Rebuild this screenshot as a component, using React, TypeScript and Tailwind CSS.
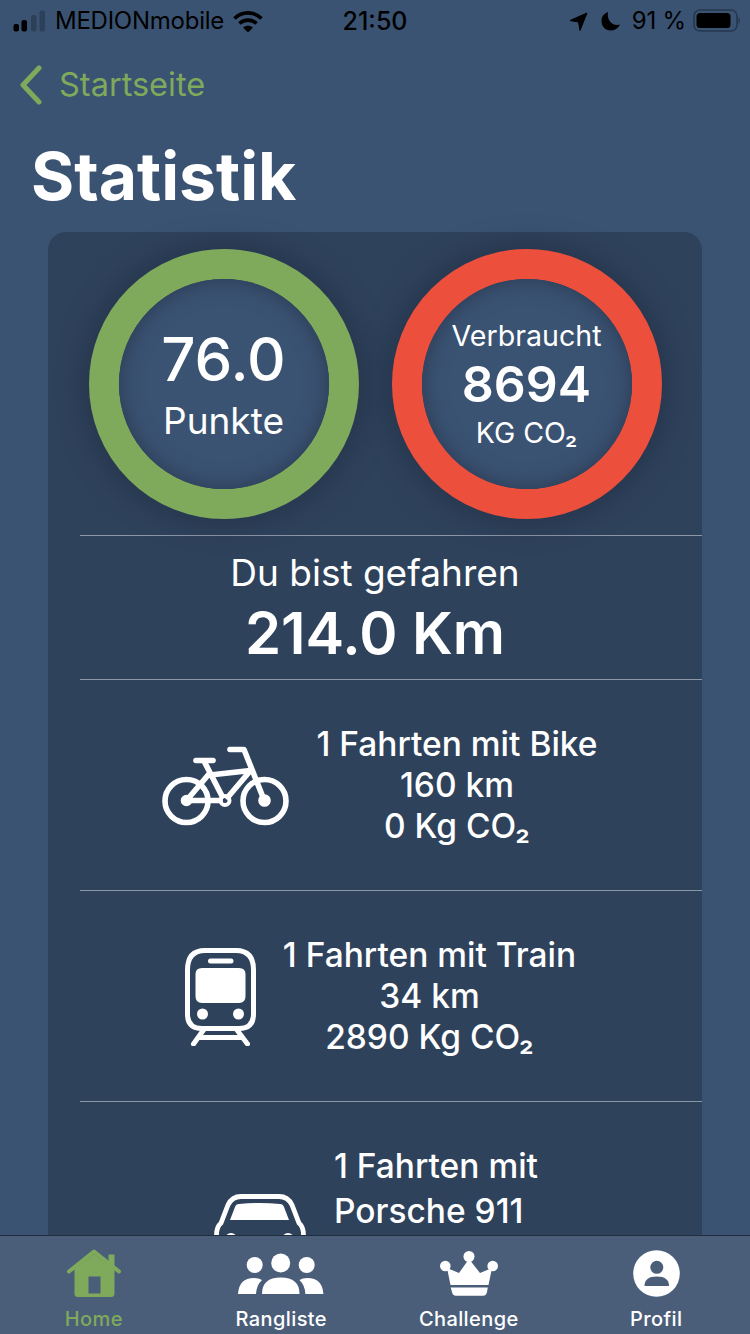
const BikeIcon = () => (
  <svg width="127" height="80" viewBox="0 0 127 80" fill="none" stroke="white" strokeWidth="5.6" strokeLinecap="round" strokeLinejoin="round" className="shrink-0">
    <circle cx="24.5" cy="55" r="21.5" />
    <circle cx="102.5" cy="55" r="21.5" />
    <path d="M68 3.5H82L102.5 55" />
    <path d="M34 14.5H51" />
    <path d="M42 15L60 50" />
    <path d="M48 29L88.5 24.5L66 51" />
    <path d="M47 28L24.5 54.5H58" />
    <circle cx="63" cy="54.5" r="4.5" strokeWidth="4" />
    <circle cx="24.5" cy="54.5" r="3" fill="white" />
    <circle cx="102.5" cy="54.5" r="3.5" fill="white" />
  </svg>
);

const TrainIcon = () => (
  <svg width="71" height="98" viewBox="0 0 71 98" fill="none" className="shrink-0 ml-[1px]">
    <path d="M20 2.5H51Q68.5 2.5 68.5 22V66Q68.5 80.5 54 80.5H17Q2.5 80.5 2.5 66V22Q2.5 2.5 20 2.5Z" stroke="white" strokeWidth="5" />
    <rect x="23" y="10.5" width="25.5" height="5" rx="2.5" fill="white" />
    <path d="M17 20H54Q60.5 20 60.5 26V48Q60.5 55 54 55H17Q10.5 55 10.5 48V26Q10.5 20 17 20Z" fill="white" />
    <circle cx="17.5" cy="66" r="5.5" fill="white" />
    <circle cx="53.5" cy="66" r="5.5" fill="white" />
    <path d="M18.5 82L8.5 96M52 82L62.5 96M14 89.5H57" stroke="white" strokeWidth="5" strokeLinecap="round" />
  </svg>
);

const CarIcon = () => (
  <svg width="92" height="78" viewBox="0 0 92 78" fill="none" className="shrink-0 mt-[50px]">
    <path d="M2.5 60V41Q2.5 33 7 29L14 11Q18 2.5 27 2.5H65Q74 2.5 78 11L85 29Q89.5 33 89.5 41V60Q89.5 66 83 66H9Q2.5 66 2.5 60Z" stroke="white" strokeWidth="4.8" />
    <path d="M25 10Q46 8 66 10Q69 10 70 13L75 26H16L21 13Q22 10 25 10Z" fill="white" />
    <circle cx="17" cy="45" r="6" fill="white" />
    <circle cx="74" cy="45" r="6" fill="white" />
    <rect x="32" y="41" width="27" height="7" rx="2" fill="white" />
  </svg>
);

const StatusBar = () => (
  <div className="grid grid-cols-3 items-center h-[40px] text-black text-[24px] leading-none pt-[2px]">
    <div className="flex items-center pl-[13px] whitespace-nowrap">
      <svg width="33" height="22" viewBox="0 0 33 22" className="shrink-0">
        <rect x="0.5" y="14" width="5.5" height="7.5" rx="2" fill="black" />
        <rect x="8.5" y="10" width="5.5" height="11.5" rx="2" fill="black" />
        <rect x="18" y="5" width="5.5" height="16.5" rx="2" fill="#2c405a" />
        <rect x="26.5" y="0.5" width="5.5" height="21" rx="2" fill="#2c405a" />
      </svg>
      <span className="ml-[9px] tracking-[-0.25px]">MEDIONmobile</span>
      <svg width="30" height="23" viewBox="0 0 30 23" fill="none" stroke="black" strokeWidth="3.6" className="ml-[9px] shrink-0">
        <path d="M1.5 8.5C9 1 21 1 28.5 8.5" />
        <path d="M6.5 13.5C11 9 19 9 23.5 13.5" />
        <path d="M15 22.5L10 17.5C13 15 17 15 20 17.5Z" fill="black" stroke="none" />
      </svg>
    </div>
    <div className="text-center font-medium text-[25px]">21:50</div>
    <div className="flex items-center justify-end pr-[10px]">
      <svg width="19" height="19" viewBox="0 0 19 19" className="shrink-0">
        <path d="M18 1L1 8.5L9.5 10L11 18.5Z" fill="black" stroke="black" strokeLinejoin="round" />
      </svg>
      <svg width="20" height="20" viewBox="0 0 20 20" className="ml-[13px] shrink-0">
        <path d="M7 1C2.5 2.5 0.5 6 0.5 10C0.5 15.5 4.5 19.5 9.5 19.5C13.5 19.5 17 17.5 19 13.5C13 15.5 5.5 11 7 1Z" fill="black" />
      </svg>
      <span className="ml-[11px] tracking-[-0.2px]">91 %</span>
      <svg width="47" height="24" viewBox="0 0 47 24" fill="none" className="ml-[7px] shrink-0">
        <rect x="1" y="1" width="43" height="21" rx="6" stroke="#26374e" strokeWidth="1.6" />
        <rect x="3.5" y="4" width="34" height="15" rx="3.5" fill="black" />
        <path d="M45.5 8.5V14.5C46.5 14 47 13 47 11.5C47 10 46.5 9 45.5 8.5Z" fill="#26374e" />
      </svg>
    </div>
  </div>
);

const Ring = ({ color, children }: { color: string; children: React.ReactNode }) => (
  <div className={`w-[270px] h-[270px] rounded-full border-[30px] shadow-[0_0_30px_rgba(20,30,45,0.5)] ${color}`}>
    <div className="w-full h-full rounded-full bg-[#3b5373] shadow-[inset_0_0_22px_rgba(30,42,60,0.6)] flex flex-col items-center justify-center text-white">
      {children}
    </div>
  </div>
);

const Divider = () => <div className="ml-[32px] h-px bg-[#8a96a6]" />;

const TripRow = ({ icon, title, km, co2 }: { icon: React.ReactNode; title: string; km: string; co2: string }) => (
  <div className="flex items-center justify-center gap-[27px] pt-[44px] pb-[43px] pl-[10px] text-white">
    {icon}
    <div className="text-center text-[33.5px] leading-[41px] font-medium whitespace-nowrap">
      <div>{title}</div>
      <div>{km}</div>
      <div>{co2}</div>
    </div>
  </div>
);

const HomeIcon = () => (
  <svg width="54" height="48" viewBox="0 0 54 48" fill="none">
    <path d="M7.5 20L27 5L41.5 16V5.5H47.5V21V44.5Q47.5 48 44 48H11Q7.5 48 7.5 44.5Z" fill="#7fa95b" />
    <path d="M2 22.5L27 2.5L52 22.5" stroke="#7fa95b" strokeWidth="4" strokeLinecap="round" strokeLinejoin="round" />
    <rect x="21.5" y="27.5" width="12" height="17" fill="#4a5e7a" />
  </svg>
);

const PeopleIcon = () => (
  <svg width="86" height="41" viewBox="0 0 86 41" fill="white">
    <circle cx="42.7" cy="10" r="9.5" />
    <circle cx="16.7" cy="12" r="8" />
    <circle cx="68.7" cy="12" r="8" />
    <path d="M24 41Q24 24.5 42.7 24.5Q61.5 24.5 61.5 41Z" />
    <path d="M0 41Q1 25 16 25Q21 25 24 27Q18.5 32 18 41Z" />
    <path d="M85.4 41Q84.4 25 69.4 25Q64.4 25 61.4 27Q66.9 32 67.4 41Z" />
  </svg>
);

const CrownIcon = () => (
  <svg width="58" height="45" viewBox="0 0 58 45" fill="white">
    <circle cx="29" cy="5.5" r="5.5" />
    <circle cx="5.3" cy="15" r="5.3" />
    <circle cx="52.7" cy="15" r="5.3" />
    <path d="M7 17L19 22L29 8L40 22L52 17L48.5 34H10.5Z" />
    <path d="M10.7 36.5H47.8L47 41Q46.5 44.7 43 44.7H16Q12.5 44.7 12 41Z" />
  </svg>
);

const ProfileIcon = () => (
  <svg width="47" height="47" viewBox="0 0 47 47">
    <circle cx="23.5" cy="23.5" r="23.3" fill="white" />
    <circle cx="23.8" cy="17.3" r="6.5" fill="#4a5e7a" />
    <path d="M11.5 36Q11.5 26.5 23.8 26.5Q36 26.5 36 36Z" fill="#4a5e7a" />
  </svg>
);

const tabs = [
  { label: "Home", icon: <HomeIcon />, active: true },
  { label: "Rangliste", icon: <PeopleIcon /> },
  { label: "Challenge", icon: <CrownIcon /> },
  { label: "Profil", icon: <ProfileIcon /> },
];

export default function App() {
  return (
    <div className="w-[750px] h-[1334px] flex flex-col overflow-hidden bg-[#3b5373] font-['Inter',sans-serif]">
      <div className="flex-1 min-h-0 overflow-hidden">
        <StatusBar />

        {/* Back link */}
        <div className="flex items-center h-[84px] pl-[20px] text-[#7fa95b] pt-[6px]">
          <svg width="24" height="40" viewBox="0 0 24 40" fill="none" stroke="#7fa95b" strokeWidth="5" strokeLinecap="round" strokeLinejoin="round" className="shrink-0">
            <path d="M19 3L3 20L19 37" />
          </svg>
          <span className="ml-[15px] text-[32.5px] leading-none">Startseite</span>
        </div>

        <h1 className="pl-[31px] pt-[7px] h-[108px] text-[66px] leading-[90px] font-bold text-white">Statistik</h1>

        <div className="mx-[48px] rounded-t-[18px] bg-[#2f425c]">
          {/* Rings */}
          <div className="flex justify-center gap-[33px] pt-[17px] pb-[16px]">
            <Ring color="border-[#7fa95b]">
              <div className="text-[60px] leading-[70px] font-medium">76.0</div>
              <div className="text-[37px] leading-[46px] mt-[4px]">Punkte</div>
            </Ring>
            <Ring color="border-[#ec4f3c]">
              <div className="text-[28.6px] leading-[36px] mt-[1px]">Verbraucht</div>
              <div className="text-[50px] leading-[60px] font-semibold">8694</div>
              <div className="text-[28.5px] leading-[36px] mt-[1px]">KG CO₂</div>
            </Ring>
          </div>
          <Divider />

          <div className="h-[143px] text-center text-white pt-[14px]">
            <div className="text-[37px] leading-[46px]">Du bist gefahren</div>
            <div className="text-[58px] leading-[70px] mt-[2px] font-semibold">214.0 Km</div>
          </div>
          <Divider />

          <TripRow icon={<BikeIcon />} title="1 Fahrten mit Bike" km="160 km" co2="0 Kg CO₂" />
          <Divider />
          <TripRow icon={<TrainIcon />} title="1 Fahrten mit Train" km="34 km" co2="2890 Kg CO₂" />
          <Divider />
          <div className="flex items-start justify-center gap-[28px] pt-[42px] pb-[43px] pl-[2px] text-white">
            <CarIcon />
            <div className="text-[33.5px] leading-[45px] font-medium whitespace-nowrap">
              1 Fahrten mit<br />Porsche 911
            </div>
          </div>
        </div>
      </div>

      {/* Tab bar */}
      <div className="grid grid-cols-4 h-[99px] shrink-0 bg-[#4a5e7a] border-t border-[#1f2d3f]">
        {tabs.map((t) => (
          <div key={t.label} className="flex flex-col items-center">
            <div className="h-[70px] flex items-center justify-center pt-[4px]">{t.icon}</div>
            <div className={`text-[20px] leading-[24px] mt-[1px] font-medium tracking-[0.4px] ${t.active ? "text-[#7fa95b]" : "text-white"}`}>{t.label}</div>
          </div>
        ))}
      </div>
    </div>
  );
}
